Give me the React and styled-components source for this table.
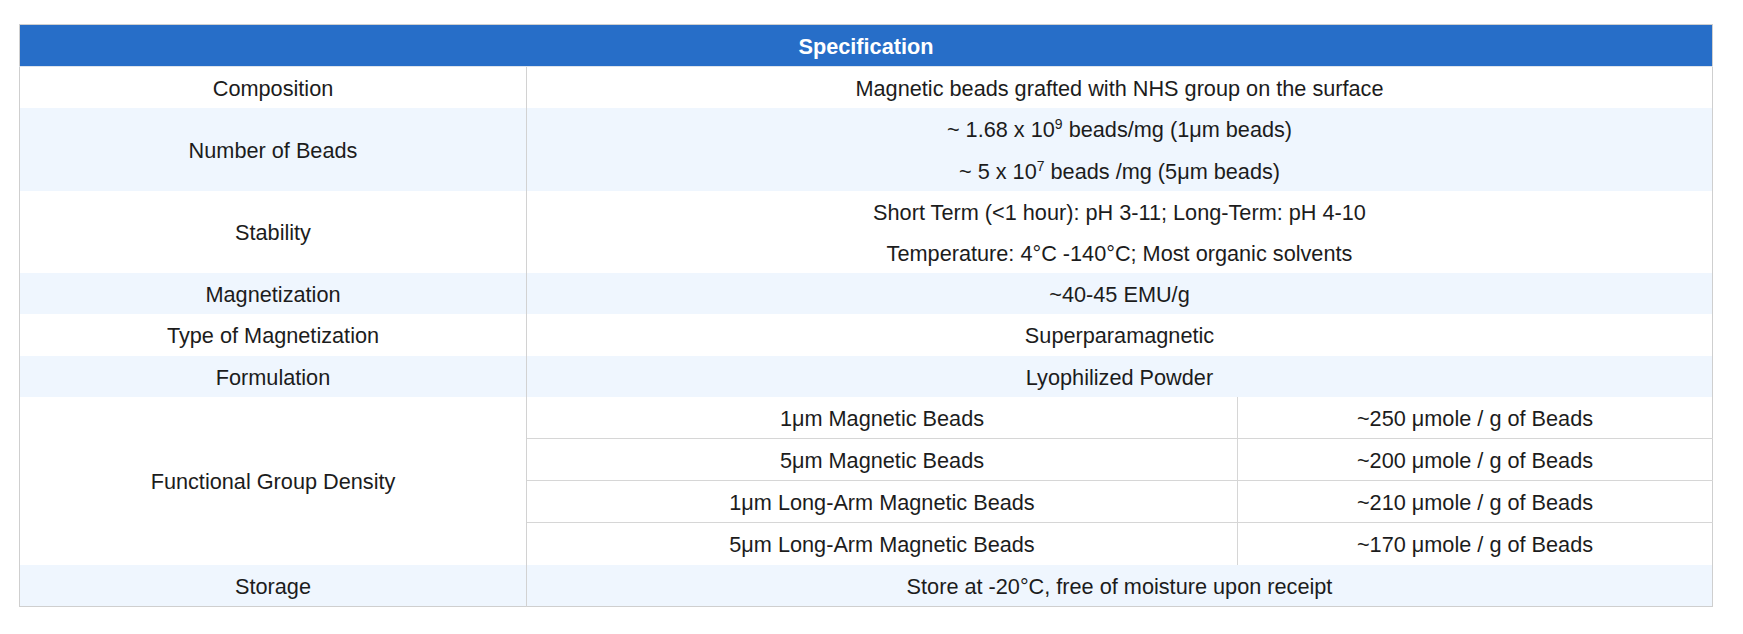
import React from "react";
import styled, { createGlobalStyle } from "styled-components";

const Global = createGlobalStyle`
  html, body { margin: 0; padding: 0; background: #ffffff; }
  body { font-family: "Liberation Sans", Arial, sans-serif; }
`;

const Page = styled.div`
  padding: 24px 30px 0 19px;
`;

const Table = styled.table`
  width: 1694px;
  border-collapse: collapse;
  border: 1px solid #cfcfcf;
  table-layout: fixed;
  font-family: "Liberation Sans", Arial, sans-serif;
  font-size: 21.7px;
  color: #1c1c1c;
`;

const HeadCell = styled.th`
  background: #276ec8;
  color: #ffffff;
  font-weight: 700;
  text-align: center;
  padding: 9px 8px 7px;
  line-height: 25.2px;
  border-bottom: 1px solid #dde4ec;
`;

const Row = styled.tr`
  background: ${(p) => (p.$striped ? "#eff6fe" : "#ffffff")};
`;

const LabelCell = styled.td`
  text-align: center;
  vertical-align: middle;
  padding: 0;
  border-right: 1px solid #d2d2d2;
`;

const ValueCell = styled.td`
  text-align: center;
  vertical-align: middle;
  padding: 0;
  border-bottom: ${(p) => (p.$ruled ? "1px solid #d6d6d6" : "none")};
  border-right: ${(p) => (p.$split ? "1px solid #d6d6d6" : "none")};
`;

const Line = styled.div`
  padding: 9px 8px 7px;
  line-height: 25.2px;
`;

const Sup = styled.sup`
  font-size: 14px;
  line-height: 0;
  vertical-align: 8px;
`;

const densities = [
  ["1μm Magnetic Beads", "~250 μmole / g of Beads"],
  ["5μm Magnetic Beads", "~200 μmole / g of Beads"],
  ["1μm Long-Arm Magnetic Beads", "~210 μmole / g of Beads"],
  ["5μm Long-Arm Magnetic Beads", "~170 μmole / g of Beads"],
];

function Simple({ label, striped, children }) {
  return (
    <Row $striped={striped}>
      <LabelCell>
        <Line>{label}</Line>
      </LabelCell>
      <ValueCell colSpan={2}>{children}</ValueCell>
    </Row>
  );
}

export default function App() {
  return (
    <Page>
      <Global />
      <Table>
        <colgroup>
          <col style={{ width: "507px" }} />
          <col style={{ width: "711px" }} />
          <col />
        </colgroup>
        <thead>
          <tr>
            <HeadCell colSpan={3}>Specification</HeadCell>
          </tr>
        </thead>
        <tbody>
          <Simple label="Composition">
            <Line>Magnetic beads grafted with NHS group on the surface</Line>
          </Simple>
          <Simple label="Number of Beads" striped>
            <Line>
              ~ 1.68 x 10<Sup>9</Sup> beads/mg (1μm beads)
            </Line>
            <Line>
              ~ 5 x 10<Sup>7</Sup> beads /mg (5μm beads)
            </Line>
          </Simple>
          <Simple label="Stability">
            <Line>Short Term (&lt;1 hour): pH 3-11; Long-Term: pH 4-10</Line>
            <Line>Temperature: 4°C -140°C; Most organic solvents</Line>
          </Simple>
          <Simple label="Magnetization" striped>
            <Line>~40-45 EMU/g</Line>
          </Simple>
          <Simple label="Type of Magnetization">
            <Line>Superparamagnetic</Line>
          </Simple>
          <Simple label="Formulation" striped>
            <Line>Lyophilized Powder</Line>
          </Simple>
          {densities.map(([size, amount], i) => (
            <Row key={size}>
              {i === 0 && (
                <LabelCell rowSpan={densities.length}>
                  <Line>Functional Group Density</Line>
                </LabelCell>
              )}
              <ValueCell $split $ruled={i < densities.length - 1}>
                <Line>{size}</Line>
              </ValueCell>
              <ValueCell $ruled={i < densities.length - 1}>
                <Line>{amount}</Line>
              </ValueCell>
            </Row>
          ))}
          <Simple label="Storage" striped>
            <Line>Store at -20°C, free of moisture upon receipt</Line>
          </Simple>
        </tbody>
      </Table>
    </Page>
  );
}
